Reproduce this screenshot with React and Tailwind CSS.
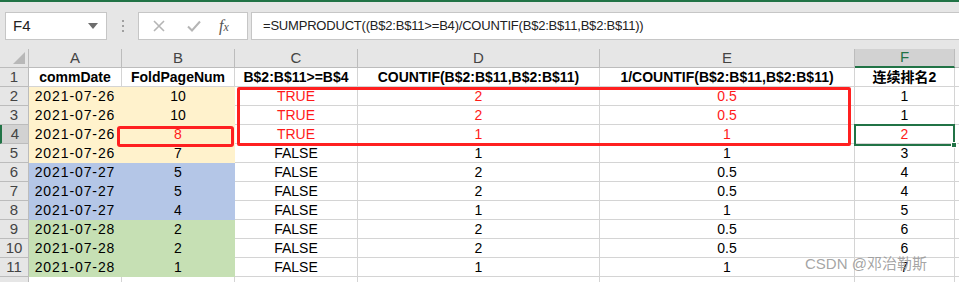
import React from 'react';

const FONT = "font-['Liberation_Sans','Noto_Sans_CJK_SC',sans-serif]";

const fills = {
  y: 'bg-[#fff2cc] border-[#fff2cc]',
  b: 'bg-[#b4c6e7] border-[#b4c6e7]',
  g: 'bg-[#c6e0b4] border-[#c6e0b4]',
};

const cols = [
  { key: 'A', w: 'w-[93px]' },
  { key: 'B', w: 'w-[113px]' },
  { key: 'C', w: 'w-[123px]' },
  { key: 'D', w: 'w-[242px]' },
  { key: 'E', w: 'w-[255px]' },
  { key: 'F', w: 'w-[100px]' },
];

const headers = [
  'commDate',
  'FoldPageNum',
  'B$2:B$11>=B$4',
  'COUNTIF(B$2:B$11,B$2:B$11)',
  '1/COUNTIF(B$2:B$11,B$2:B$11)',
  '连续排名2',
];

// date, fold, test, countif, 1/countif, rank, fill, red columns
const rows = [
  ['2021-07-26', '10', 'TRUE', '2', '0.5', '1', 'y', [2, 3, 4]],
  ['2021-07-26', '10', 'TRUE', '2', '0.5', '1', 'y', [2, 3, 4]],
  ['2021-07-26', '8', 'TRUE', '1', '1', '2', 'y', [1, 2, 3, 4, 5]],
  ['2021-07-26', '7', 'FALSE', '1', '1', '3', 'y', []],
  ['2021-07-27', '5', 'FALSE', '2', '0.5', '4', 'b', []],
  ['2021-07-27', '5', 'FALSE', '2', '0.5', '4', 'b', []],
  ['2021-07-27', '4', 'FALSE', '1', '1', '5', 'b', []],
  ['2021-07-28', '2', 'FALSE', '2', '0.5', '6', 'g', []],
  ['2021-07-28', '2', 'FALSE', '2', '0.5', '6', 'g', []],
  ['2021-07-28', '1', 'FALSE', '1', '1', '7', 'g', []],
];

function FormulaBar() {
  return (
    <div className="h-[47px] bg-[#e6e6e6] flex items-start pt-[10px] pl-[5px] gap-0">
      <div className="w-[102px] h-[28px] bg-white border border-[#c6c6c6] flex items-center justify-between pl-[7px] pr-[8px]">
        <span className="text-[15px] text-[#222]">F4</span>
        <svg width="10" height="6" viewBox="0 0 10 6"><path d="M0 0h10L5 6z" fill="#6d6d6d" /></svg>
      </div>
      <div className="w-[31px] h-[28px] flex flex-col items-center justify-center gap-[3px]">
        <span className="w-[2px] h-[2px] bg-[#a0a0a0]" />
        <span className="w-[2px] h-[2px] bg-[#a0a0a0]" />
        <span className="w-[2px] h-[2px] bg-[#a0a0a0]" />
      </div>
      <div className="w-[110px] h-[28px] bg-white border border-[#c6c6c6] flex items-center pl-[12px]">
        <svg width="14" height="14" viewBox="0 0 14 14" className="ml-[1px]">
          <path d="M2 2L12 12M12 2L2 12" stroke="#b5b5b5" strokeWidth="1.6" />
        </svg>
        <svg width="16" height="14" viewBox="0 0 16 14" className="ml-[20px]">
          <path d="M2 7.5L6 11.5L14 2.5" stroke="#b5b5b5" strokeWidth="2" fill="none" />
        </svg>
        <span className="ml-[17px] font-['Liberation_Serif',serif] italic text-[16px] text-[#555]">
          f<span className="text-[12px]">x</span>
        </span>
      </div>
      <div className="ml-[3px] flex-1 h-[28px] bg-white border border-[#c6c6c6] border-r-0 flex items-center pl-[11px]">
        <span className="text-[13px] tracking-[-0.2px] text-[#222]">=SUMPRODUCT((B$2:B$11&gt;=B4)/COUNTIF(B$2:B$11,B$2:B$11))</span>
      </div>
    </div>
  );
}

function ColumnHeader() {
  return (
    <div className="flex h-[19px] bg-[#e6e6e6] text-[15px] text-[#444]">
      <div className="w-[29px] border-r border-b border-[#bcbcbc] flex items-end justify-end pr-[3px] pb-[3px]">
        <svg width="12" height="12" viewBox="0 0 12 12"><path d="M12 0V12H0z" fill="#b8b8b8" /></svg>
      </div>
      {cols.map((c) =>
        c.key === 'F' ? (
          <div key={c.key} className={`${c.w} bg-[#d2d2d2] border-r border-[#bcbcbc] border-b-2 border-b-[#217346] flex items-center justify-center text-[#217346]`}>
            {c.key}
          </div>
        ) : (
          <div key={c.key} className={`${c.w} border-r border-b border-[#bcbcbc] flex items-center justify-center`}>
            {c.key}
          </div>
        )
      )}
      <div className="flex-1 border-b border-[#bcbcbc]" />
    </div>
  );
}

function Row({ num, cells, fill, red, bold }) {
  const selected = num === 4;
  return (
    <div className="flex h-[19px] text-[14px]">
      <div
        className={
          selected
            ? 'w-[29px] bg-[#d2d2d2] border-b border-[#bcbcbc] border-l-2 border-l-[#217346] border-r border-r-[#bcbcbc] flex items-center justify-center text-[15px] text-[#444]'
            : 'w-[29px] bg-[#e6e6e6] border-r border-b border-[#bcbcbc] flex items-center justify-center text-[15px] text-[#444]'
        }
      >
        {num}
      </div>
      {cells.map((v, i) => {
        const filled = fill && i < 2;
        const base = filled ? fills[fill] : 'bg-white border-[#d4d4d4]';
        const color = red.includes(i) ? 'text-[#ff1a1a]' : 'text-black';
        return (
          <div
            key={i}
            className={`${cols[i].w} ${base} ${color} ${bold ? 'font-bold' : ''} ${i === 0 && !bold ? 'tracking-[0.9px]' : ''} border-r border-b flex items-center justify-center whitespace-nowrap`}
          >
            {v}
          </div>
        );
      })}
      <div className="flex-1 bg-white border-b border-[#d4d4d4]" />
    </div>
  );
}

export default function App() {
  return (
    <div className={`w-[959px] h-[282px] overflow-hidden bg-white ${FONT}`}>
      <div className="h-[2px] bg-[#217346]" />
      <FormulaBar />
      <div className="relative">
        <ColumnHeader />
        <Row num={1} cells={headers} red={[]} bold />
        {rows.map((r, i) => (
          <Row key={i} num={i + 2} cells={r.slice(0, 6)} fill={r[6]} red={r[7]} />
        ))}
        <div className="flex h-[10px]">
          <div className="w-[29px] bg-[#e6e6e6] border-r border-[#bcbcbc]" />
          {cols.map((c) => (
            <div key={c.key} className={`${c.w} border-r border-[#d4d4d4]`} />
          ))}
        </div>

        {/* annotation boxes */}
        <div className="absolute left-[117px] top-[77px] w-[117px] h-[21px] border-[3px] border-[#ff2020] rounded-[3px]" />
        <div className="absolute left-[237px] top-[38px] w-[614px] h-[59px] border-[3px] border-[#ff2020] rounded-[2px]" />
        {/* selected cell */}
        <div className="absolute left-[854px] top-[75px] w-[101px] h-[22px] border-2 border-[#217346]" />
        <div className="absolute left-[951px] top-[93px] w-[6px] h-[6px] bg-[#217346] border border-white" />

        <div className="absolute left-[805px] top-[204px] text-[15px] text-[#9a9a9a]/90 whitespace-nowrap">
          CSDN @邓治勒斯
        </div>
      </div>
    </div>
  );
}
